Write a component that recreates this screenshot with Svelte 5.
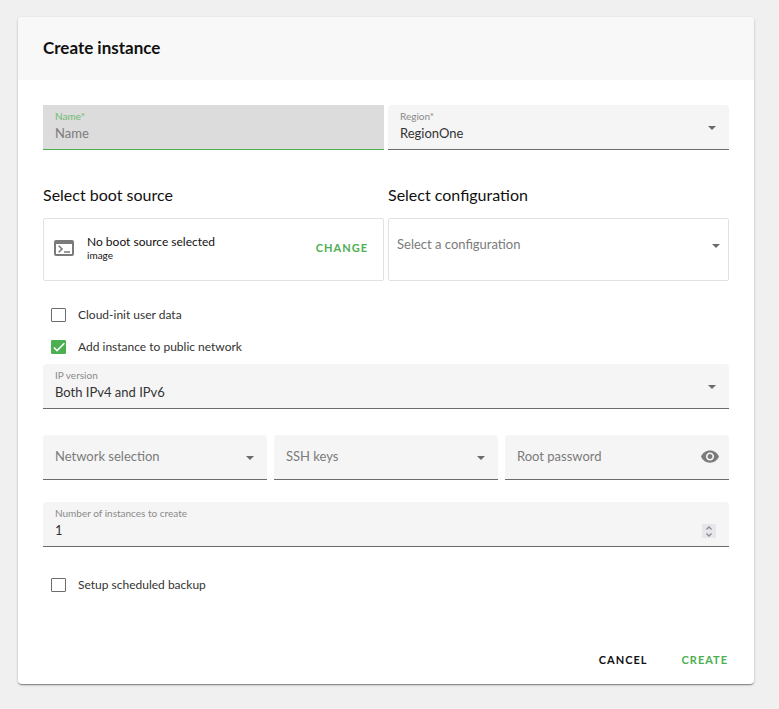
<script>
  let name = $state('')
  let region = $state('RegionOne')
  let configuration = $state('')
  let cloudInit = $state(false)
  let publicNetwork = $state(true)
  let ipVersion = $state('both')
  let network = $state('')
  let sshKey = $state('')
  let password = $state('')
  let showPassword = $state(false)
  let count = $state(1)
  let backup = $state(false)

  const step = (by) => (count = Math.max(1, count + by))
</script>

{#snippet arrow()}
  <svg class="arrow" viewBox="0 0 8 4" aria-hidden="true"><path d="M0 0h8L4 4z" /></svg>
{/snippet}

{#snippet tick()}
  <svg class="tick" viewBox="0 0 24 24" aria-hidden="true">
    <path d="M1.73 12.91 8.1 19.28 22.79 4.59" />
  </svg>
{/snippet}

<main>
  <form class="card" onsubmit={(e) => e.preventDefault()}>
    <header>
      <h1>Create instance</h1>
    </header>

    <div class="content">
      <div class="row halves">
        <div class="field focused">
          <label for="name">Name*</label>
          <input id="name" type="text" placeholder="Name" bind:value={name} />
        </div>
        <div class="field">
          <label for="region">Region*</label>
          <select id="region" bind:value={region}>
            <option>RegionOne</option>
          </select>
          {@render arrow()}
        </div>
      </div>

      <div class="row halves sources">
        <section>
          <h2>Select boot source</h2>
          <div class="box">
            <svg class="terminal" viewBox="0 0 20 16" aria-hidden="true">
              <path
                fill-rule="evenodd"
                d="M2 0h16a2 2 0 0 1 2 2v12a2 2 0 0 1-2 2H2a2 2 0 0 1-2-2V2a2 2 0 0 1 2-2zm0 4v10h16V4z"
              />
              <path class="prompt" d="m4.7 5.8 3.3 3.2-3.3 3.2M10 12h6" />
            </svg>
            <div class="source">
              <span class="source-name">No boot source selected</span>
              <span class="source-type">image</span>
            </div>
            <button type="button" class="text-button primary">Change</button>
          </div>
        </section>
        <section>
          <h2>Select configuration</h2>
          <div class="box picker">
            <select aria-label="Select configuration" class:empty={!configuration} bind:value={configuration}>
              <option value="">Select a configuration</option>
            </select>
            {@render arrow()}
          </div>
        </section>
      </div>

      <div class="checks">
        <label class="check">
          <span class="mark"><input type="checkbox" bind:checked={cloudInit} />{@render tick()}</span>
          Cloud-init user data
        </label>
        <label class="check">
          <span class="mark"><input type="checkbox" bind:checked={publicNetwork} />{@render tick()}</span>
          Add instance to public network
        </label>
      </div>

      <div class="field">
        <label for="ip-version">IP version</label>
        <select id="ip-version" bind:value={ipVersion}>
          <option value="both">Both IPv4 and IPv6</option>
          <option value="4">IPv4</option>
          <option value="6">IPv6</option>
        </select>
        {@render arrow()}
      </div>

      <div class="row thirds">
        <div class="field resting">
          <label for="network">Network selection</label>
          <select id="network" bind:value={network}>
            <option value=""></option>
          </select>
          {@render arrow()}
        </div>
        <div class="field resting">
          <label for="ssh-keys">SSH keys</label>
          <select id="ssh-keys" bind:value={sshKey}>
            <option value=""></option>
          </select>
          {@render arrow()}
        </div>
        <div class="field resting">
          <label for="password">Root password</label>
          <input id="password" type={showPassword ? 'text' : 'password'} bind:value={password} />
          <button
            type="button"
            class="eye"
            aria-label="Show password"
            onclick={() => (showPassword = !showPassword)}
          >
            <svg viewBox="1 4 22 16" aria-hidden="true">
              <path
                d="M12 4.5C7 4.5 2.73 7.61 1 12c1.73 4.39 6 7.5 11 7.5s9.27-3.11 11-7.5c-1.73-4.39-6-7.5-11-7.5zM12 17c-2.76 0-5-2.24-5-5s2.24-5 5-5 5 2.24 5 5-2.24 5-5 5zm0-8c-1.66 0-3 1.34-3 3s1.34 3 3 3 3-1.34 3-3-1.34-3-3-3z"
              />
            </svg>
          </button>
        </div>
      </div>

      <div class="field">
        <label for="count">Number of instances to create</label>
        <input id="count" type="number" min="1" bind:value={count} />
        <span class="stepper">
          <button type="button" aria-label="Increase" onclick={() => step(1)}>
            <svg viewBox="0 0 6 4" aria-hidden="true"><path d="m.4 3.4 2.6-2.4 2.6 2.4" /></svg>
          </button>
          <button type="button" aria-label="Decrease" onclick={() => step(-1)}>
            <svg viewBox="0 0 6 4" aria-hidden="true"><path d="m.4.6 2.6 2.4 2.6-2.4" /></svg>
          </button>
        </span>
      </div>

      <div class="checks backup">
        <label class="check">
          <span class="mark"><input type="checkbox" bind:checked={backup} />{@render tick()}</span>
          Setup scheduled backup
        </label>
      </div>
    </div>

    <footer>
      <button type="button" class="text-button">Cancel</button>
      <button type="submit" class="text-button primary">Create</button>
    </footer>
  </form>
</main>

<style>
  :global(body) {
    margin: 0;
    background: #f0f0f0;
  }

  main {
    padding: 17px 25px 25px 18px;
    font-family: 'Proxima Nova', Lato, 'Liberation Sans', sans-serif;
    color: #111;
  }

  .card {
    border-radius: 4px;
    background: #fff;
    box-shadow:
      0 2px 1px -1px rgba(0, 0, 0, 0.2),
      0 1px 1px rgba(0, 0, 0, 0.2),
      0 1px 3px rgba(0, 0, 0, 0.2);
  }

  header {
    padding: 19px 25px 21px;
    border-radius: 4px 4px 0 0;
    background: #f8f8f8;
  }

  h1 {
    margin: 0;
    font-size: 17px;
    line-height: 23px;
    font-weight: 700;
  }

  h2 {
    margin: 0 0 11px;
    font-size: 16px;
    line-height: 24px;
    font-weight: 400;
  }

  .content {
    padding: 25px 25px 0;
  }

  .row {
    display: grid;
  }

  .halves {
    grid-template-columns: 1fr 1fr;
    gap: 4px;
  }

  .thirds {
    grid-template-columns: 1fr 1fr 1fr;
    gap: 7px;
    margin: 26px 0 22px;
  }

  .sources {
    margin-top: 33px;
  }

  input,
  select,
  button {
    margin: 0;
    border: 0;
    border-radius: 0;
    outline: 0;
    background: none;
    font-family: inherit;
    color: inherit;
    appearance: none;
  }

  button {
    padding: 0;
    cursor: pointer;
  }

  /* label, control and trailing icon share one grid cell */
  .field {
    display: grid;
    align-items: center;
    height: 44px;
    border-bottom: 1px solid #6b6b6b;
    border-radius: 4px 4px 0 0;
    background: #f5f5f5;
  }

  .field > * {
    grid-area: 1 / 1;
    min-width: 0;
  }

  .field label {
    align-self: start;
    padding: 4px 12px 0;
    font-size: 10px;
    line-height: 14px;
    color: #8a8a8a;
    pointer-events: none;
  }

  .field input,
  .field select {
    box-sizing: border-box;
    width: 100%;
    height: 44px;
    padding: 12px 12px 0;
    font-size: 13px;
    color: #333;
  }

  .field.focused {
    border-color: #4caf50;
    border-radius: 0;
    background: #dcdcdc;
  }

  .field.focused label {
    color: #6dba70;
  }

  .field input::placeholder {
    color: #7b7b7b;
    opacity: 1;
  }

  .field.resting label {
    align-self: center;
    padding: 0 12px 2px;
    font-size: 13px;
    line-height: 18px;
    color: #7b7b7b;
  }

  .arrow {
    justify-self: end;
    width: 8px;
    height: 4px;
    margin: 2px 13px 0 0;
    fill: #6b6b6b;
    pointer-events: none;
  }

  .eye {
    justify-self: end;
    width: 18px;
    height: 14px;
    margin-right: 10px;
  }

  .eye svg {
    display: block;
    fill: #7b7b7b;
  }

  input[type='number'] {
    appearance: textfield;
  }

  input[type='number']::-webkit-inner-spin-button {
    appearance: none;
  }

  .stepper {
    display: grid;
    align-self: end;
    justify-self: end;
    width: 14px;
    height: 14px;
    margin: 0 13px 8px 0;
    background: #e6e6eb;
  }

  .stepper button {
    display: grid;
    place-items: center;
  }

  .stepper svg {
    width: 6px;
    height: 4px;
    fill: none;
    stroke: #8a8a92;
    stroke-width: 1.3;
  }

  .box {
    display: flex;
    align-items: center;
    box-sizing: border-box;
    height: 63px;
    padding: 0 15px 4px 10px;
    border: 1px solid #e2e2e2;
    border-radius: 2px;
  }

  .terminal {
    width: 20px;
    height: 16px;
    margin-right: 13px;
    fill: #7b7b7b;
  }

  .prompt {
    fill: none;
    stroke: #7b7b7b;
    stroke-width: 1.6;
  }

  .source {
    display: flex;
    flex: 1;
    flex-direction: column;
  }

  .source-name {
    font-size: 12px;
    line-height: 14px;
  }

  .source-type {
    font-size: 10px;
    line-height: 12px;
  }

  .picker {
    display: grid;
    padding: 0;
  }

  .picker > * {
    grid-area: 1 / 1;
  }

  .picker select {
    width: 100%;
    height: 61px;
    padding: 0 8px 12px;
    font-size: 13px;
  }

  .picker .empty {
    color: #7b7b7b;
  }

  .picker .arrow {
    margin: 0 8px 8px 0;
  }

  .check {
    display: flex;
    align-items: center;
    gap: 12px;
    box-sizing: border-box;
    height: 32px;
    padding-bottom: 2px;
    font-size: 12px;
    color: #333;
  }

  .checks {
    padding: 18px 8px 1px;
  }

  .backup {
    padding-top: 22px;
  }

  .mark {
    display: grid;
    width: 15px;
    height: 14px;
    margin-top: 2px;
  }

  .mark > * {
    grid-area: 1 / 1;
  }

  .mark input {
    box-sizing: border-box;
    width: 15px;
    height: 14px;
    border: 1px solid #6b6b6b;
    border-radius: 1px;
  }

  .mark input:checked {
    border-color: #4caf50;
    background: #4caf50;
  }

  .tick {
    place-self: center;
    width: 12px;
    height: 12px;
    fill: none;
    stroke: #fff;
    stroke-width: 3;
    visibility: hidden;
    pointer-events: none;
  }

  input:checked + .tick {
    visibility: visible;
  }

  .text-button {
    font-size: 11px;
    line-height: 16px;
    font-weight: 700;
    letter-spacing: 1px;
    text-transform: uppercase;
  }

  .primary {
    color: #4caf50;
  }

  footer {
    display: flex;
    justify-content: flex-end;
    gap: 34px;
    padding: 50px 26px 16px;
  }
</style>
